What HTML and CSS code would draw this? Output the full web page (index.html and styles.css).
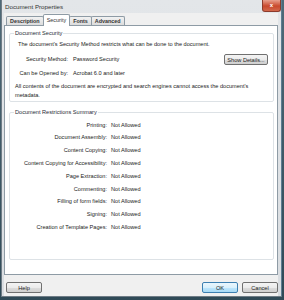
FILE: index.html
```html
<!DOCTYPE html>
<html>
<head>
  <meta charset="utf-8">
  <link rel="stylesheet" href="styles.css">
</head>
<body>
  <div class="window">
    <div class="titlebar">
      <span class="title">Document Properties</span>
      <span class="close">x</span>
    </div>
    <div class="client">
      <div class="tabs">
        <div class="tab">Description</div>
        <div class="tab active">Security</div>
        <div class="tab">Fonts</div>
        <div class="tab">Advanced</div>
      </div>

      <div class="panel">
        <fieldset class="group security">
          <legend>Document Security</legend>
          <p class="intro">The document's Security Method restricts what can be done to the document.</p>
          <div class="method-row">
            <div class="pair">
              <span class="label">Security Method:</span>
              <span>Password Security</span>
            </div>
            <button class="details">Show Details...</button>
          </div>
          <div class="pair opened">
            <span class="label">Can be Opened by:</span>
            <span>Acrobat 6.0 and later</span>
          </div>
          <p class="note">All contents of the document are encrypted and search engines cannot access the document's metadata.</p>
        </fieldset>

        <fieldset class="group restrictions">
          <legend>Document Restrictions Summary</legend>
          <div class="summary">
            <span class="label">Printing:</span><span>Not Allowed</span>
            <span class="label">Document Assembly:</span><span>Not Allowed</span>
            <span class="label">Content Copying:</span><span>Not Allowed</span>
            <span class="label">Content Copying for Accessibility:</span><span>Not Allowed</span>
            <span class="label">Page Extraction:</span><span>Not Allowed</span>
            <span class="label">Commenting:</span><span>Not Allowed</span>
            <span class="label">Filling of form fields:</span><span>Not Allowed</span>
            <span class="label">Signing:</span><span>Not Allowed</span>
            <span class="label">Creation of Template Pages:</span><span>Not Allowed</span>
          </div>
        </fieldset>
      </div>

      <div class="footer">
        <button class="help">Help</button>
        <div class="actions">
          <button class="ok">OK</button>
          <button class="cancel">Cancel</button>
        </div>
      </div>
    </div>
  </div>
</body>
</html>
```

FILE: styles.css
```css
body {
  margin: 0;
  height: 300px;
  background: linear-gradient(to bottom, #4f6a78, #2f4a57);
  font-family: "Liberation Sans", Arial, sans-serif;
  font-size: 5.6px;
  color: #222;
  overflow: hidden;
}
.window {
  margin-left: 1px;
  width: 281px;
  height: 297px;
  box-sizing: border-box;
  background: linear-gradient(to bottom, #e3e6e9, #d9dde1);
  border: 1px solid #6f7c86;
  border-top: none;
  border-right-color: #5d7d92;
}
.titlebar {
  height: 13px;
  display: flex;
  align-items: center;
  padding-left: 3px;
}
.title {
  font-size: 6.2px;
  color: #333;
}
.close {
  margin-left: auto;
  align-self: flex-start;
  width: 17px;
  height: 11px;
  border-radius: 0 0 3px 3px;
  background: linear-gradient(to bottom, #e8a08e, #c9492d 55%, #d2684c);
  border: 1px solid #8d3b2c;
  border-top: none;
  color: #fff;
  font-size: 6px;
  font-weight: bold;
  text-align: center;
  line-height: 10px;
}

.client {
  margin: 0 3px 0 2px;
  background: #f0f0f0;
}
.tabs {
  height: 12px;
  display: flex;
  align-items: flex-end;
  padding-left: 2px;
}
.tab {
  height: 8px;
  line-height: 8px;
  padding: 0 3px;
  border: 1px solid #8e9ba5;
  border-bottom: none;
  border-radius: 2px 2px 0 0;
  background: linear-gradient(to bottom, #f2f2f2, #dcdcdc);
  margin-right: -1px;
  font-weight: bold;
  color: #333;
  font-size: 5.4px;
}
.tab.active {
  height: 11px;
  line-height: 10px;
  background: #fff;
  position: relative;
  top: 1px;
  z-index: 1;
  font-weight: normal;
}

.panel {
  height: 250px;
  box-sizing: border-box;
  background: #fff;
  border: 1px solid #8e9ba5;
  padding-top: 3px;
}
.group {
  margin: 0 3px 0 4px;
  padding: 0;
  border: 1px solid #dde2e6;
  border-radius: 2px;
}
.group legend {
  margin-left: 4px;
  padding: 0 1px;
  line-height: 8px;
  color: #1f2a36;
}
.intro {
  margin: 3px 0 0 8px;
  line-height: 9px;
}
.method-row {
  display: flex;
  align-items: center;
  margin-top: 5px;
  height: 11px;
}
.pair {
  display: grid;
  grid-template-columns: 58px auto;
  column-gap: 5px;
  line-height: 9px;
}
.pair .label, .summary .label {
  text-align: right;
}
.opened {
  margin-top: 4px;
}
.details {
  margin-left: auto;
  margin-right: 5px;
  width: 44px;
}
.note {
  margin: 4px 6px 1px 5px;
  line-height: 9px;
}

.restrictions {
  margin-top: 6px;
  height: 150px;
}
.summary {
  display: grid;
  grid-template-columns: 97px auto;
  column-gap: 4px;
  line-height: 12.8px;
  padding-top: 2.6px;
}

button {
  height: 11px;
  padding: 0;
  font-family: "Liberation Sans", Arial, sans-serif;
  font-size: 5.6px;
  color: #222;
  background: linear-gradient(to bottom, #f4f4f4 0%, #ebebeb 50%, #dddddd 51%, #cfcfcf 100%);
  border: 1px solid #707070;
  border-radius: 2px;
}
.footer {
  display: flex;
  justify-content: space-between;
  padding: 7px 0 0 2px;
  height: 14px;
}
.help {
  width: 36px;
}
.actions {
  display: flex;
  gap: 4px;
}
.ok {
  width: 36px;
  border-color: #3c7fb1;
  background: linear-gradient(to bottom, #eaf6fd 0%, #d9f0fc 50%, #bee6fd 51%, #a7d9f5 100%);
}
.cancel {
  width: 36px;
}
```
